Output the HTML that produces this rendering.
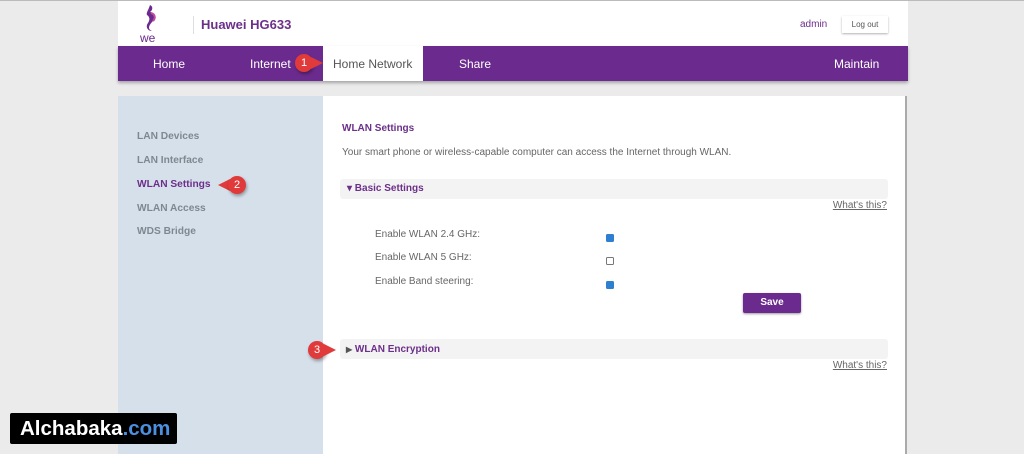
<!DOCTYPE html>
<html><head><meta charset="utf-8"><style>
*{margin:0;padding:0;box-sizing:border-box}
body{width:1024px;height:454px;overflow:hidden;background:#ebebeb;font-family:"Liberation Sans",Arial,sans-serif;position:relative}
.a{position:absolute}
.nav{color:#fff;font-size:12px;top:57px}
.side{color:#7f8890;font-size:10.2px;font-weight:bold;left:137px}
.lbl{color:#666;font-size:10px;left:375px}
.cb{width:8px;height:8px;border-radius:1.5px;left:606px}
.chk{background:#2f7fd0}
.un{border:1px solid #777;background:#fff}
.wt{font-size:10px;color:#666;text-decoration:underline;right:137px}
.badge{background:#e03a3a;color:#fff;font-size:11px;width:18px;height:18px;border-radius:50%;text-align:center;line-height:18px;box-shadow:1px 2px 3px rgba(0,0,0,.35)}
</style></head><body>
<div class="a" style="left:0;top:0;width:1024px;height:1px;background:#bbb"></div>
<div class="a" style="left:118px;top:1px;width:790px;height:45px;background:#fff"></div>
<svg class="a" style="left:138px;top:3px" width="28" height="40" viewBox="0 0 28 40">
<path d="M12 2 C16 4 14 8 12 9 C17 10 19 14 15 18 C11 22 9 26 14 28 C10 28 7 24 10 20 C12 17 12 14 9 12 C8 10 10 8 12 2Z" fill="#6a2a8f"/>
<path d="M13 10 C17 11 18 15 15 18" stroke="#c44a9b" stroke-width="2" fill="none"/>
<text x="2" y="39" font-size="12" fill="#6a2a8f" font-family="Liberation Sans" font-weight="300">we</text></svg>
<div class="a" style="left:193px;top:16px;width:1px;height:18px;background:#ddd"></div>
<div class="a" style="left:201px;top:17px;font-size:13px;font-weight:bold;color:#6c2f8a">Huawei HG633</div>
<div class="a" style="left:800px;top:19px;font-size:10px;color:#6c2f8a">admin</div>
<div class="a" style="left:842px;top:16px;width:46px;height:17px;background:#fff;box-shadow:0 1px 2px rgba(0,0,0,.3);font-size:8px;color:#555;text-align:center;line-height:17px">Log out</div>
<div class="a" style="left:118px;top:46px;width:790px;height:35px;background:#6b2b8e;box-shadow:0 2px 3px rgba(0,0,0,.3)"></div>
<div class="a" style="left:323px;top:46px;width:100px;height:35px;background:#fff"></div>
<div class="a nav" style="left:153px">Home</div>
<div class="a nav" style="left:250px">Internet</div>
<div class="a nav" style="left:333px;color:#555">Home Network</div>
<div class="a nav" style="left:459px">Share</div>
<div class="a nav" style="left:834px">Maintain</div>
<div class="a badge" style="left:295px;top:54px">1</div>
<div class="a" style="left:311px;top:57px;width:0;height:0;border-top:6px solid transparent;border-bottom:6px solid transparent;border-left:12px solid #e03a3a"></div>
<div class="a" style="left:118px;top:96px;width:205px;height:358px;background:#d6e0ea"></div>
<div class="a" style="left:323px;top:96px;width:584px;height:358px;background:#fff;border-right:2px solid #aaa"></div>
<div class="a side" style="top:131px">LAN Devices</div>
<div class="a side" style="top:155px">LAN Interface</div>
<div class="a side" style="top:179px;color:#6c2f8a">WLAN Settings</div>
<div class="a side" style="top:203px">WLAN Access</div>
<div class="a side" style="top:226px">WDS Bridge</div>
<div class="a" style="left:218px;top:179px;width:0;height:0;border-top:6px solid transparent;border-bottom:6px solid transparent;border-right:12px solid #e03a3a"></div>
<div class="a badge" style="left:228px;top:176px">2</div>
<div class="a" style="left:342px;top:123px;font-size:10px;font-weight:bold;color:#6c2f8a">WLAN Settings</div>
<div class="a" style="left:342px;top:147px;font-size:10px;color:#666">Your smart phone or wireless-capable computer can access the Internet through WLAN.</div>
<div class="a" style="left:340px;top:179px;width:548px;height:20px;background:#f3f3f3;border-radius:3px"></div>
<div class="a" style="left:347px;top:183px;font-size:10px;font-weight:bold;color:#6c2f8a">▾ Basic Settings</div>
<div class="a wt" style="top:200px">What's this?</div>
<div class="a lbl" style="top:229px">Enable WLAN 2.4 GHz:</div>
<div class="a lbl" style="top:252px">Enable WLAN 5 GHz:</div>
<div class="a lbl" style="top:276px">Enable Band steering:</div>
<div class="a cb chk" style="top:234px"></div>
<div class="a cb un" style="top:257px"></div>
<div class="a cb chk" style="top:281px"></div>
<div class="a" style="left:743px;top:293px;width:58px;height:20px;background:#6b2b8e;border-radius:2px;color:#fff;font-size:10px;font-weight:bold;text-align:center;line-height:20px;box-shadow:0 1px 2px rgba(0,0,0,.4)">Save</div>
<div class="a" style="left:340px;top:339px;width:548px;height:20px;background:#f3f3f3;border-radius:3px"></div>
<div class="a" style="left:346px;top:344px;font-size:10px;font-weight:bold;color:#6c2f8a"><span style="color:#555;font-size:8px">▶</span> WLAN Encryption</div>
<div class="a badge" style="left:308px;top:341px">3</div>
<div class="a" style="left:324px;top:344px;width:0;height:0;border-top:6px solid transparent;border-bottom:6px solid transparent;border-left:12px solid #e03a3a"></div>
<div class="a wt" style="top:360px">What's this?</div>
<div class="a" style="left:10px;top:413px;width:167px;height:31px;background:#000;border-radius:2px;color:#fff;font-size:20.5px;font-weight:bold;line-height:31px;padding-left:10px;white-space:nowrap">Alchabaka<span style="color:#4a8fe0">.com</span></div>
</body></html>
